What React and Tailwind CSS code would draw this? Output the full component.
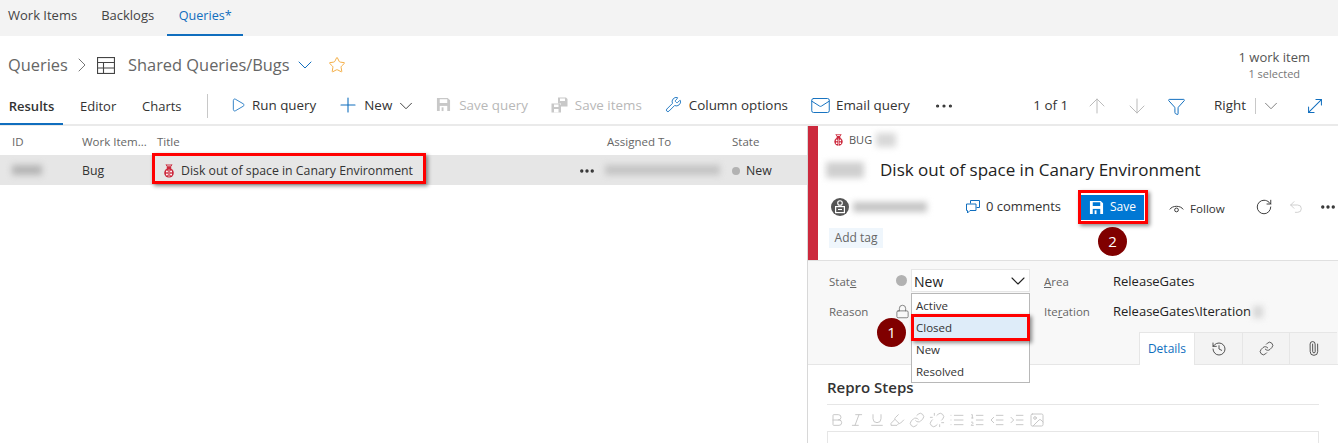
import { ArrowUp, ArrowDown, ChevronDown, ChevronRight, Ellipsis, Funnel, History, Link, Lock, Mail, MoveDiagonal, Paperclip, Play, Plus, RotateCw, Star, Undo2, Unlink, Wrench, Bold, Italic, Underline, List, ListOrdered, Outdent, Indent, Image, Highlighter } from "lucide-react";

const Bug = ({ className }) => (
  <svg viewBox="0 0 14 16" className={className}>
    <path d="M3.5 0.5L5 3M10.5 0.5L9 3M3.5 1h7" stroke="#cc293d" strokeWidth="1.1" fill="none" />
    <rect x="4.5" y="2.5" width="5" height="3.5" rx="1" fill="#cc293d" />
    <circle cx="7" cy="10.2" r="5.6" fill="#cc293d" />
    <circle cx="4.6" cy="8.6" r="1.15" fill="#fff" />
    <circle cx="9.4" cy="8.6" r="1.15" fill="#fff" />
    <circle cx="4.6" cy="12.2" r="1.15" fill="#fff" />
    <circle cx="9.4" cy="12.2" r="1.15" fill="#fff" />
    <path d="M7 6v9.8" stroke="#fff" strokeWidth=".7" />
  </svg>
);

const SaveIcon = ({ className, hole = "#fff" }) => (
  <svg viewBox="0 0 16 16" className={className}>
    <path d="M1 1h11.5L15 3.5V15H1z" fill="currentColor" />
    <rect x="4" y="2.4" width="8" height="4" fill={hole} />
    <rect x="4" y="9.5" width="8" height="5.5" fill={hole} />
    <rect x="6" y="11" width="2" height="4" fill="currentColor" />
  </svg>
);

const SaveItemsIcon = ({ className }) => (
  <svg viewBox="0 0 17 16" className={className}>
    <path d="M7 0.5h8l1.500 1.500v7.500H10V6.500H7z" fill="currentColor" />
    <rect x="9" y="1.500" width="5" height="2.500" fill="#fff" />
    <path d="M0.500 6.500h8L10 8v7.500H0.500z" fill="currentColor" />
    <rect x="3" y="7.500" width="4.500" height="2.500" fill="#fff" />
    <rect x="3" y="12" width="4.500" height="3.500" fill="#fff" />
  </svg>
);

const GridIcon = ({ className }) => (
  <svg viewBox="0 0 18 17" fill="none" stroke="#444" strokeWidth="1.1" className={className}>
    <rect x=".55" y=".55" width="16.9" height="15.9" />
    <path d="M.5 5.500h17M.5 11h17M6.500 5.500V16.500" />
  </svg>
);

const CommentsIcon = ({ className }) => (
  <svg viewBox="0 0 14 14" fill="none" stroke="#106ebe" strokeWidth="1" className={className}>
    <path d="M4.500 3.500V.5h9v7h-3" />
    <path d="M.5 4h9.500v6.500H4l-2.500 2.500v-2.500h-1z" />
  </svg>
);

const Avatar = () => (
  <svg viewBox="0 0 18 18" className="ml-[5px] h-[18px] w-[18px] shrink-0">
    <circle cx="9" cy="9" r="9" fill="#555" />
    <circle cx="9" cy="5" r="2.300" fill="none" stroke="#fff" strokeWidth="1.100" />
    <rect x="4.600" y="8.600" width="8.800" height="6" fill="none" stroke="#fff" strokeWidth="1.200" />
    <path d="M7 11.500h4" stroke="#fff" strokeWidth="1.100" />
  </svg>
);

const EyeIcon = () => (
  <svg viewBox="0 0 16 10" fill="none" stroke="#333" strokeWidth="1" className="ml-[25px] mt-[3px] h-[10px] w-[15px] shrink-0">
    <path d="M.8 5.500C3.500 1 12.500 1 15.200 5.500" />
    <circle cx="8" cy="6" r="2" />
  </svg>
);

const Smudge = ({ className }) => <span className={`inline-block bg-[#b5b5b5] blur-[3px] ${className}`} />;

// fixed-width box so the lucide icon's built-in padding doesn't push the layout around
const Slot = ({ className, children }) => <span className={`flex shrink-0 items-center justify-center [&>svg]:shrink-0 ${className}`}>{children}</span>;

const Tool = ({ icon, label, className = "", text = "text-[#333]" }) => (
  <div className={`flex items-center pb-[2px] ${className}`}>
    {icon}
    <span className={text}>{label}</span>
  </div>
);

const EditorIcon = ({ Icon }) => (
  <Slot className="w-[20px]"><Icon size={16} strokeWidth={1.4} className="text-[#c4c4c4]" /></Slot>
);

export default function App() {
  return (
    <div className="relative h-[443px] w-[1338px] overflow-hidden bg-white text-[13px] text-[#333] font-['Open_Sans',sans-serif]">
      {/* top tabs */}
      <div className="flex h-[36px] bg-[#f3f3f3]">
        <div className="flex items-center pb-1 pl-2 text-[#444]">Work Items</div>
        <div className="ml-[24px] flex items-center pb-1 text-[#444]">Backlogs</div>
        <div className="ml-[13px] flex w-[76px] items-center justify-center border-b-2 border-[#106ebe] pb-0.5 text-[12.6px] text-[#106ebe]">Queries*</div>
      </div>

      {/* breadcrumb */}
      <div className="flex h-[54px] items-start justify-between">
        <div className="mt-[17px] flex items-center text-[16.4px] text-[#555]">
          <span className="ml-2 w-[60px] text-[#666]">Queries</span>
          <Slot className="ml-[10px] w-[7px]"><ChevronRight size={24} strokeWidth={1} className="text-[#777]" /></Slot>
          <GridIcon className="ml-[12px] h-[17px] w-[18px]" />
          <span className="ml-[13px] w-[162px] text-[#666]">Shared Queries/Bugs</span>
          <Slot className="ml-[8px] w-[14px]"><ChevronDown size={24} strokeWidth={1} className="text-[#106ebe]" /></Slot>
          <Star size={18} strokeWidth={1.25} className="ml-[16px] text-[#f2a93b]" />
        </div>
        <div className="mr-[28px] mt-[12px] flex flex-col items-center">
          <span className="leading-[18px] text-[#555]">1 work item</span>
          <span className="text-[11px] leading-[16px] text-[#777]">1 selected</span>
        </div>
      </div>

      {/* toolbar */}
      <div className="flex h-[36px] items-center border-b-2 border-[#eaeaea] pb-[2px] text-[13.4px]">
        <div className="-mb-[2px] flex h-[36px] w-[63px] items-center justify-center border-b-2 border-[#106ebe] pt-[2px] text-[13px] font-semibold">Results</div>
        <span className="ml-[17px] w-[36px] pt-[2px] text-[13px]">Editor</span>
        <span className="ml-[26px] w-[40px] pt-[2px] text-[13px]">Charts</span>
        <div className="ml-[25px] h-[24px] w-px bg-[#c8c8c8]" />
        <Tool className="ml-[23px] gap-[8px]" icon={<Slot className="w-[13px]"><Play size={16} strokeWidth={1.25} className="text-[#106ebe]" /></Slot>} label="Run query" />
        <Tool className="ml-[23px] gap-[8px]" icon={<Slot className="w-[17px]"><Plus size={24} strokeWidth={1.1} className="text-[#106ebe]" /></Slot>} label="New" />
        <Slot className="ml-[8px] w-[12px]"><ChevronDown size={22} strokeWidth={1} /></Slot>
        <Tool className="ml-[24px] gap-[8px]" icon={<SaveIcon className="h-[15px] w-[15px] text-[#c8c8c8]" />} label="Save query" text="text-[#b8b8b8]" />
        <Tool className="ml-[23px] gap-[7px]" icon={<SaveItemsIcon className="h-[16px] w-[17px] text-[#c8c8c8]" />} label="Save items" text="text-[#b8b8b8]" />
        <Tool className="ml-[23px] gap-[7px]" icon={<Wrench size={17} strokeWidth={1.25} className="text-[#106ebe]" />} label="Column options" />
        <Tool className="ml-[23px] gap-[7px]" icon={<Slot className="w-[18px]"><Mail size={21} strokeWidth={1.1} className="text-[#106ebe]" /></Slot>} label="Email query" />
        <Slot className="ml-[26px] w-[17px]"><Ellipsis size={22} strokeWidth={1.5} /></Slot>
        <span className="ml-auto pb-[2px]">1 of 1</span>
        <Slot className="ml-[21px] w-[15px]"><ArrowUp size={24} strokeWidth={1} className="text-[#bbb]" /></Slot>
        <Slot className="ml-[25px] w-[15px]"><ArrowDown size={24} strokeWidth={1} className="text-[#bbb]" /></Slot>
        <Slot className="ml-[24px] w-[17px]"><Funnel size={19} strokeWidth={1.25} className="text-[#106ebe]" /></Slot>
        <span className="ml-[29px] pb-[2px]">Right</span>
        <div className="ml-[9px] h-[16px] w-px bg-[#c8c8c8]" />
        <Slot className="ml-[9px] w-[12px]"><ChevronDown size={22} strokeWidth={1} className="text-[#777]" /></Slot>
        <Slot className="ml-[30px] mr-[16px] w-[15px]"><MoveDiagonal size={22} strokeWidth={1.1} className="text-[#106ebe]" /></Slot>
      </div>

      <div className="flex h-[317px]">
        {/* results grid */}
        <div className="w-[808px] shrink-0 border-r border-[#d8d8d8]">
          <div className="flex h-[29px] items-center pt-[2px] text-[11.5px] text-[#666]">
            <span className="ml-3 w-[70px]">ID</span>
            <span className="w-[75px]">Work Item...</span>
            <span className="w-[450px]">Title</span>
            <span className="w-[125px]">Assigned To</span>
            <span>State</span>
          </div>
          <div className="flex h-[30px] items-center bg-[#e6e6e6] pt-[2px] text-[12.3px]">
            <span className="ml-3 w-[70px]"><Smudge className="h-[10px] w-[30px]" /></span>
            <span className="w-[75px]">Bug</span>
            <span className="flex w-[448px] items-center gap-[6px] pl-[6px]">
              <Bug className="h-[14px] w-[12px]" />
              Disk out of space in Canary Environment
              <Slot className="ml-auto mr-[10px] w-[16px]"><Ellipsis size={18} strokeWidth={2.5} /></Slot>
            </span>
            <span className="w-[127px]"><Smudge className="h-[10px] w-[115px] bg-[#c4c4c4]" /></span>
            <span className="flex items-center gap-[6px]"><span className="h-[8px] w-[8px] rounded-full bg-[#b2b2b2]" />New</span>
          </div>
        </div>

        {/* work item form */}
        <div className="flex min-w-0 flex-1 flex-col overflow-hidden">
          <div className="flex h-[135px] shrink-0 border-b border-[#e0e0e0]">
            <div className="w-[10px] bg-[#cc293d]" />
            <div className="flex-1 pl-[8px]">
              <div className="mt-[6px] flex h-[16px] items-center pl-[7px] text-[11px] text-[#555]">
                <Bug className="h-[12px] w-[11px]" />
                <span className="ml-[5px]">BUG</span>
                <Smudge className="ml-[4px] h-[14px] w-[20px] bg-[#d8d8d8]" />
              </div>
              <div className="mt-[10px] flex h-[24px] items-center text-[17px] text-[#222]">
                <Smudge className="h-[16px] w-[38px] bg-[#cfcfcf]" />
                <span className="ml-[16px]">Disk out of space in Canary Environment</span>
              </div>
              <div className="mt-[13px] flex h-[24px] items-center">
                <Avatar />
                <Smudge className="ml-[4px] h-[10px] w-[74px] bg-[#c4c4c4]" />
                <CommentsIcon className="ml-[39px] h-[14px] w-[14px] shrink-0" />
                <span className="ml-[6px] w-[76px] whitespace-nowrap">0 comments</span>
                <div className="ml-[18px] flex h-[25px] w-[64px] shrink-0 items-center gap-[6px] bg-[#0078d4] pl-[9px] text-[12px] text-white">
                  <SaveIcon className="h-[15px] w-[15px] text-white" hole="#0078d4" />
                  Save
                </div>
                <EyeIcon />
                <span className="ml-[6px] mt-[3px] w-[34px] text-[11.6px]">Follow</span>
                <RotateCw size={18} strokeWidth={1.25} className="ml-[31px] shrink-0" />
                <Undo2 size={16} strokeWidth={1.25} className="ml-[15px] shrink-0 text-[#c8c8c8]" />
                <Slot className="ml-[16px] w-[15px]"><Ellipsis size={18} strokeWidth={2.5} /></Slot>
              </div>
              <div className="ml-[3px] mt-[9px] flex h-[20px] w-[54px] items-center justify-center bg-[#eff6fc] text-[12px] text-[#666]">Add tag</div>
            </div>
          </div>

          <div className="h-[104px] shrink-0 border-b border-[#e6e6e6] bg-[#f8f8f8]">
            <div className="flex h-[66px] pt-[8px]">
              <div className="ml-[21px] flex w-[67px] flex-col gap-[8px] text-[11.5px] text-[#666]">
                <span className="flex h-[23px] items-center pt-[2px]"><span>Stat<u>e</u></span></span>
                <span className="flex h-[23px] items-center">Reason</span>
              </div>
              <div className="flex w-[15px] flex-col gap-[8px]">
                <span className="flex h-[23px] items-center"><span className="h-[11px] w-[11px] rounded-full bg-[#b2b2b2]" /></span>
                <span className="flex h-[23px] items-center"><Lock size={15} strokeWidth={1.25} className="-ml-[1px] text-[#666]" /></span>
              </div>
              <div className="flex h-[23px] w-[119px] items-center justify-between border border-[#e6e6e6] bg-white pl-[2px] pr-[4px] pt-[1px] text-[14px] text-[#222]">
                New
                <Slot className="w-[14px]"><ChevronDown size={24} strokeWidth={1.1} /></Slot>
              </div>
              <div className="ml-[14px] flex w-[69px] flex-col gap-[8px] text-[11.5px] text-[#666]">
                <span className="flex h-[23px] items-center pt-[2px]"><span><u>A</u>rea</span></span>
                <span className="flex h-[23px] items-center"><span>Ite<u>r</u>ation</span></span>
              </div>
              <div className="flex flex-col gap-[8px] text-[#222]">
                <span className="flex h-[23px] items-center pt-[2px]">ReleaseGates</span>
                <span className="flex h-[23px] items-center">ReleaseGates\Iteration<Smudge className="ml-[2px] h-[12px] w-[10px] bg-[#d5d5d5]" /></span>
              </div>
            </div>
            <div className="ml-[331px] flex h-[38px] pt-[5px]">
              <div className="flex h-[33px] w-[56px] items-center justify-center border-x border-t border-[#e6e6e6] bg-white text-[12px] text-[#106ebe]">Details</div>
              <div className="flex h-[32px] w-[48px] items-center justify-center border-r border-t border-[#e6e6e6] bg-[#f3f3f3]"><History size={16} strokeWidth={1.25} /></div>
              <div className="flex h-[32px] w-[47px] items-center justify-center border-r border-t border-[#e6e6e6] bg-[#f3f3f3]"><Link size={15} strokeWidth={1.25} /></div>
              <div className="flex h-[32px] w-[47px] items-center justify-center border-t border-[#e6e6e6] bg-[#f3f3f3]"><Paperclip size={15} strokeWidth={1.25} className="-rotate-45" /></div>
            </div>
          </div>

          <div className="shrink-0 px-[19px] pt-[12px]">
            <div className="h-[28px] border-b border-[#e6e6e6] text-[15px] font-semibold leading-[20px] text-[#333]">Repro Steps</div>
            <div className="flex h-[26px] items-center pt-[4px]">
              <EditorIcon Icon={Bold} />
              <EditorIcon Icon={Italic} />
              <EditorIcon Icon={Underline} />
              <EditorIcon Icon={Highlighter} />
              <EditorIcon Icon={Link} />
              <EditorIcon Icon={Unlink} />
              <EditorIcon Icon={List} />
              <EditorIcon Icon={ListOrdered} />
              <EditorIcon Icon={Outdent} />
              <EditorIcon Icon={Indent} />
              <EditorIcon Icon={Image} />
            </div>
            <div className="h-[40px] border border-[#e6e6e6]" />
          </div>
        </div>
      </div>

      {/* state dropdown */}
      <div className="absolute left-[911px] top-[293px] w-[119px] border border-[#b8b8b8] bg-white pt-[1px] text-[11.5px]">
        <div className="flex h-[22px] items-center pl-[4px]">Active</div>
        <div className="flex h-[22px] items-center bg-[#deecf9] pl-[4px]">Closed</div>
        <div className="flex h-[22px] items-center pl-[4px]">New</div>
        <div className="flex h-[21px] items-center pl-[4px]">Resolved</div>
      </div>

      {/* screenshot annotations */}
      <div className="absolute left-[152px] top-[153px] h-[31px] w-[274px] border-[3px] border-[#f00] shadow-[2px_2px_4px_rgba(0,0,0,.45)]" />
      <div className="absolute left-[1078px] top-[190px] h-[34px] w-[70px] border-[3px] border-[#f00] shadow-[2px_2px_4px_rgba(0,0,0,.45)]" />
      <div className="absolute left-[911px] top-[314px] h-[27px] w-[119px] border-[3px] border-[#f00] shadow-[2px_2px_4px_rgba(0,0,0,.45)]" />
      <div className="absolute left-[877px] top-[318px] flex h-[29px] w-[29px] items-center justify-center rounded-full bg-[#800000] text-[15px] text-white">1</div>
      <div className="absolute left-[1098px] top-[227px] flex h-[29px] w-[29px] items-center justify-center rounded-full bg-[#800000] text-[15px] text-white">2</div>
    </div>
  );
}
